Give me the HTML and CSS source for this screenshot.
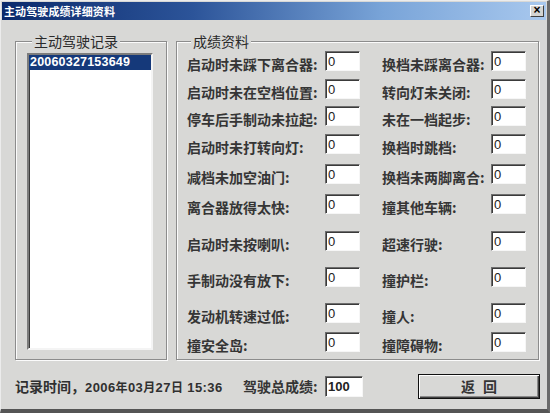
FILE: index.html
```html
<!DOCTYPE html>
<html lang="zh-CN">
<head>
<meta charset="utf-8">
<title>主动驾驶成绩详细资料</title>
<link rel="stylesheet" href="styles.css">
</head>
<body>
<div class="window">
  <div class="titlebar">
    <span class="title">主动驾驶成绩详细资料</span>
    <span class="close">×</span>
  </div>
  <div class="content">
    <fieldset class="group group-left">
      <legend>主动驾驶记录</legend>
      <div class="listbox">
        <div class="item selected">20060327153649</div>
      </div>
    </fieldset>
    <fieldset class="group group-right">
      <legend>成绩资料</legend>
      <div class="grid">
        <span class="lbl">启动时未踩下离合器:</span><input class="field" value="0" readonly>
        <span class="lbl lbl-r">换档未踩离合器:</span><input class="field" value="0" readonly>

        <span class="lbl">启动时未在空档位置:</span><input class="field" value="0" readonly>
        <span class="lbl lbl-r">转向灯未关闭:</span><input class="field" value="0" readonly>

        <span class="lbl">停车后手制动未拉起:</span><input class="field" value="0" readonly>
        <span class="lbl lbl-r">未在一档起步:</span><input class="field" value="0" readonly>

        <span class="lbl">启动时未打转向灯:</span><input class="field" value="0" readonly>
        <span class="lbl lbl-r">换档时跳档:</span><input class="field" value="0" readonly>

        <span class="lbl">减档未加空油门:</span><input class="field" value="0" readonly>
        <span class="lbl lbl-r">换档未两脚离合:</span><input class="field" value="0" readonly>

        <span class="lbl">离合器放得太快:</span><input class="field" value="0" readonly>
        <span class="lbl lbl-r">撞其他车辆:</span><input class="field" value="0" readonly>

        <span class="lbl">启动时未按喇叭:</span><input class="field" value="0" readonly>
        <span class="lbl lbl-r">超速行驶:</span><input class="field" value="0" readonly>

        <span class="lbl">手制动没有放下:</span><input class="field" value="0" readonly>
        <span class="lbl lbl-r">撞护栏:</span><input class="field" value="0" readonly>

        <span class="lbl">发动机转速过低:</span><input class="field" value="0" readonly>
        <span class="lbl lbl-r">撞人:</span><input class="field" value="0" readonly>

        <span class="lbl">撞安全岛:</span><input class="field" value="0" readonly>
        <span class="lbl lbl-r">撞障碍物:</span><input class="field" value="0" readonly>
      </div>
    </fieldset>
  </div>
  <div class="footer">
    <span class="time"><span class="cjk">记录时间，</span><span class="date">2006<span class="cjk">年</span>03<span class="cjk">月</span>27<span class="cjk">日</span> 15:36</span></span>
    <span class="total-lbl">驾驶总成绩:</span>
    <input class="field total" value="100" readonly>
    <button class="btn" type="button">返 回</button>
  </div>
</div>
</body>
</html>
```

FILE: styles.css
```css
html, body {
  margin: 0;
  padding: 0;
  background: #d8d8d6;
}

.window {
  width: 550px;
  height: 413px;
  box-sizing: border-box;
  background: #d8d8d6;
  border-top: 1px solid #ececec;
  border-left: 1px solid #ececec;
  border-right: 3px solid #6a6a6a;
  border-bottom: 4px solid #555;
  display: flex;
  flex-direction: column;
  font-family: "Noto Sans CJK SC", "Liberation Sans", sans-serif;
  color: #2e2e2e;
}

.titlebar {
  height: 18px;
  margin: 1px 1px 0 1px;
  background: linear-gradient(to right, #0b2a6c 0%, #2c5499 35%, #79a4d8 70%, #a8c8ee 100%);
  display: flex;
  align-items: center;
  justify-content: space-between;
  padding: 0 1px 0 2px;
}

.title {
  color: #fff;
  font-size: 11px;
  font-weight: 700;
  letter-spacing: 0.1px;
  line-height: 14px;
}

.close {
  width: 14px;
  height: 12px;
  box-sizing: border-box;
  background: #d4d4d2;
  border: 1px solid;
  border-color: #fff #404040 #404040 #fff;
  font: 700 12px/9px "Liberation Sans", sans-serif;
  text-align: center;
  color: #000;
  margin-right: 1px;
}

.content {
  display: flex;
  gap: 9px;
  padding-left: 14px;
  margin-top: 13px;
}

.group {
  margin: 0;
  border: 1px solid #8c8c8c;
  box-shadow: inset 1px 1px 0 #fbfbfb, 1px 1px 0 #fbfbfb;
  height: 327px;
  box-sizing: border-box;
  min-inline-size: 0;
}

.group legend {
  font-size: 14px;
  font-weight: 400;
  line-height: 16px;
  padding: 0 2px;
  margin-left: 5px;
  background: #d8d8d6;
  color: #2a2a2a;
}

.group-left {
  width: 152px;
  padding: 4px 13px 0 11px;
}

.group-right {
  width: 363px;
  padding: 2px 0 0 10px;
}

.group-right legend {
  margin-left: 4px;
}

.listbox {
  width: 126px;
  height: 297px;
  box-sizing: border-box;
  background: #fff;
  border: 2px solid;
  border-color: #7c7c7c #f4f4f4 #f4f4f4 #7c7c7c;
  box-shadow: inset 1px 1px 0 #3c3c3c;
}

.item {
  height: 15px;
  font: 700 12.5px/15px "Liberation Sans", sans-serif;
  letter-spacing: 0.2px;
  padding-left: 1px;
}

.selected {
  background: #15397a;
  color: #fff;
}

.grid {
  display: grid;
  grid-template-columns: 138px 35px 131px 35px;
  grid-template-rows: 28px 27px 28px 30px 30px 37px 36px 36px 29px 20px;
  align-items: start;
}

.lbl {
  font-size: 14px;
  font-weight: 700;
  line-height: 20px;
  margin-top: 3px;
  white-space: nowrap;
  color: #353535;
}

.lbl-r {
  padding-left: 22px;
}

.field {
  width: 35px;
  height: 20px;
  box-sizing: border-box;
  margin: 0;
  padding: 0 2px;
  background: #fff;
  border: 1px solid;
  border-color: #6e6e6e #f6f6f6 #f6f6f6 #6e6e6e;
  box-shadow: inset 1px 1px 0 #3a3a3a;
  font: 13px/16px "Liberation Sans", sans-serif;
  color: #222;
  outline: none;
}

.footer {
  flex: 1;
  display: flex;
  align-items: center;
  padding-left: 14px;
  padding-top: 3px;
}

.time {
  width: 228px;
  font-size: 13px;
  font-weight: 700;
  white-space: nowrap;
  color: #303030;
}

.time .cjk {
  font-size: 14px;
}

.date {
  font-family: "Liberation Sans", "Noto Sans CJK SC", sans-serif;
  letter-spacing: 0.4px;
}

.date .cjk {
  font-family: "Noto Sans CJK SC", sans-serif;
  font-size: 12px;
}

.total-lbl {
  width: 82px;
  font-size: 14px;
  font-weight: 700;
  white-space: nowrap;
  color: #353535;
}

.total {
  width: 38px;
  height: 21px;
  font-weight: 700;
}

.btn {
  margin-left: 55px;
  width: 122px;
  height: 25px;
  box-sizing: border-box;
  background: #d8d8d6;
  border: 1px solid #111;
  box-shadow: inset 1px 1px 0 #fff, inset -1px -1px 0 #404040, inset -2px -2px 0 #8a8a8a;
  font-family: "Noto Sans CJK SC", sans-serif;
  font-size: 14px;
  font-weight: 700;
  word-spacing: 5px;
  color: #353535;
  padding: 0;
}
```
